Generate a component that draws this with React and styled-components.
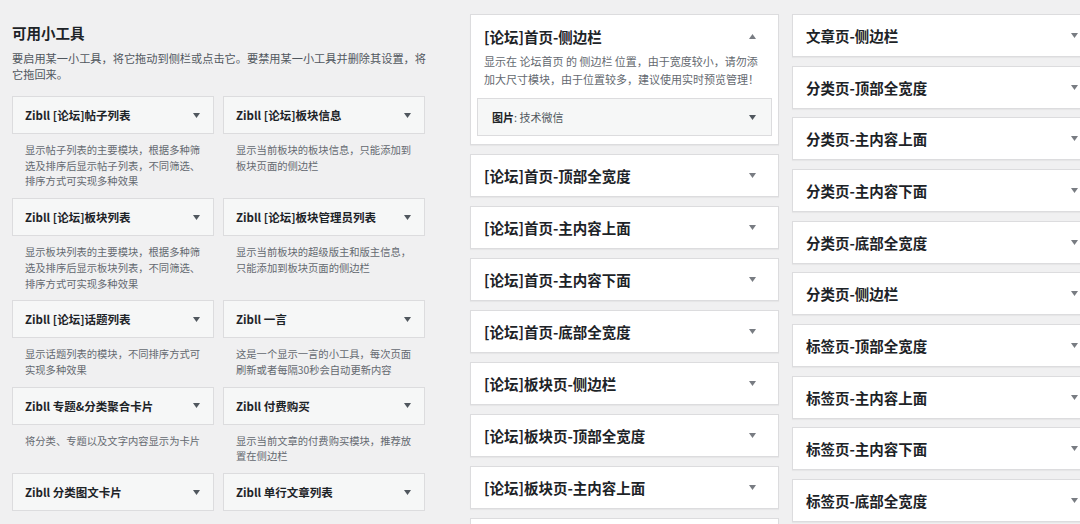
import React from "react";
import styled, { createGlobalStyle } from "styled-components";

const GlobalStyle = createGlobalStyle`
  html, body {
    margin: 0;
    padding: 0;
    background: #f0f0f1;
    overflow: hidden;
  }
  body {
    font-family: "Noto Sans CJK SC", "Noto Sans", sans-serif;
    color: #1d2327;
  }
`;

const Page = styled.div`
  display: flex;
  align-items: flex-start;
  width: 1120px;
  height: 524px;
  padding-left: 12px;
  box-sizing: border-box;
  overflow: hidden;
`;

const LeftPanel = styled.section`
  flex: 0 0 414px;
  width: 414px;
  min-width: 0;
  padding-top: 23px;
`;

const PanelTitle = styled.h2`
  margin: 0;
  font-size: 14.5px;
  line-height: 20px;
  font-weight: 700;
  color: #1d2327;
`;

const PanelIntro = styled.p`
  margin: 7px 0 0;
  font-size: 11.2px;
  line-height: 16px;
  color: #50575e;
  white-space: nowrap;
`;

const WidgetGrid = styled.div`
  display: grid;
  grid-template-columns: 202px 202px;
  column-gap: 9px;
  margin-top: 14px;
`;

const WidgetItem = styled.div`
  display: flex;
  flex-direction: column;
`;

const WidgetBox = styled.div`
  height: 38px;
  box-sizing: border-box;
  border: 1px solid #dcdcde;
  background: #f6f7f7;
  display: flex;
  align-items: center;
  justify-content: space-between;
  padding: 0 13px 0 12px;
`;

const WidgetName = styled.span`
  font-size: 11.5px;
  font-weight: 700;
  color: #1d2327;
  white-space: nowrap;
`;

const WidgetDesc = styled.div`
  padding: 8px 13px 9px;
  font-size: 10.3px;
  line-height: 15.7px;
  color: #646970;
  white-space: nowrap;
`;

const Arrow = styled.svg`
  width: 7px;
  height: 5px;
  flex: 0 0 auto;
  fill: ${(p) => p.$color || "#50575e"};
`;

const SidebarColumn = styled.div`
  flex: 0 0 309px;
  width: 309px;
  min-width: 0;
  display: flex;
  flex-direction: column;
  gap: ${(p) => p.$gap}px;
  margin-top: 14px;
  margin-left: ${(p) => p.$offset}px;
`;

const SidebarBox = styled.div`
  box-sizing: border-box;
  background: #fff;
  border: 1px solid #dcdcde;
  box-shadow: 0 1px 1px rgba(0, 0, 0, 0.04);
  padding-bottom: ${(p) => (p.$open ? "8px" : "0")};
`;

const SidebarHeader = styled.div`
  box-sizing: border-box;
  height: ${(p) => (p.$open ? "37px" : "41px")};
  padding: ${(p) => (p.$open ? "5px 22px 0 13px" : "0 22px 0 13px")};
  display: flex;
  align-items: center;
  justify-content: space-between;
`;

const SidebarName = styled.h3`
  margin: 0;
  font-size: 14.5px;
  font-weight: 700;
  color: #1d2327;
  white-space: nowrap;
`;

const SidebarDesc = styled.p`
  margin: 0;
  padding: 0 13px;
  font-size: 11px;
  line-height: 18px;
  color: #646970;
  white-space: nowrap;
`;

const InnerList = styled.div`
  margin-top: 10px;
  padding: 0 6px;
`;

const InnerWidget = styled.div`
  height: 38px;
  box-sizing: border-box;
  border: 1px solid #dcdcde;
  background: #f6f7f7;
  display: flex;
  align-items: center;
  justify-content: space-between;
  padding: 0 15px 0 14px;
`;

const InnerTitle = styled.span`
  font-size: 11px;
  font-weight: 700;
  color: #1d2327;
  white-space: nowrap;
`;

const InnerSub = styled.span`
  font-weight: 400;
  color: #50575e;
`;

const DownArrow = ({ color }) => (
  <Arrow viewBox="0 0 7 5" $color={color}>
    <polygon points="0,0 7,0 3.5,5" />
  </Arrow>
);

const UpArrow = ({ color }) => (
  <Arrow viewBox="0 0 7 5" $color={color}>
    <polygon points="0,5 7,5 3.5,0" />
  </Arrow>
);

const widgets = [
  { name: "Zibll [论坛]帖子列表", desc: ["显示帖子列表的主要模块，根据多种筛", "选及排序后显示帖子列表，不同筛选、", "排序方式可实现多种效果"] },
  { name: "Zibll [论坛]板块信息", desc: ["显示当前板块的板块信息，只能添加到", "板块页面的侧边栏"] },
  { name: "Zibll [论坛]板块列表", desc: ["显示板块列表的主要模块，根据多种筛", "选及排序后显示板块列表，不同筛选、", "排序方式可实现多种效果"] },
  { name: "Zibll [论坛]板块管理员列表", desc: ["显示当前板块的超级版主和版主信息，", "只能添加到板块页面的侧边栏"] },
  { name: "Zibll [论坛]话题列表", desc: ["显示话题列表的模块，不同排序方式可", "实现多种效果"] },
  { name: "Zibll 一言", desc: ["这是一个显示一言的小工具，每次页面", "刷新或者每隔30秒会自动更新内容"] },
  { name: "Zibll 专题&分类聚合卡片", desc: ["将分类、专题以及文字内容显示为卡片"] },
  { name: "Zibll 付费购买", desc: ["显示当前文章的付费购买模块，推荐放", "置在侧边栏"] },
  { name: "Zibll 分类图文卡片", desc: [] },
  { name: "Zibll 单行文章列表", desc: [] },
];

const middleBars = [
  "[论坛]首页-顶部全宽度",
  "[论坛]首页-主内容上面",
  "[论坛]首页-主内容下面",
  "[论坛]首页-底部全宽度",
  "[论坛]板块页-侧边栏",
  "[论坛]板块页-顶部全宽度",
  "[论坛]板块页-主内容上面",
  "",
];

const rightBars = [
  "文章页-侧边栏",
  "分类页-顶部全宽度",
  "分类页-主内容上面",
  "分类页-主内容下面",
  "分类页-底部全宽度",
  "分类页-侧边栏",
  "标签页-顶部全宽度",
  "标签页-主内容上面",
  "标签页-主内容下面",
  "标签页-底部全宽度",
];

const withBreaks = (lines) =>
  lines.map((l, i) => (
    <React.Fragment key={i}>
      {i > 0 && <br />}
      {l}
    </React.Fragment>
  ));

const SidebarBar = ({ name }) => (
  <SidebarBox>
    <SidebarHeader>
      <SidebarName>{name}</SidebarName>
      {name && <DownArrow color="#787c82" />}
    </SidebarHeader>
  </SidebarBox>
);

export default function App() {
  return (
    <>
      <GlobalStyle />
      <Page>
        <LeftPanel>
          <PanelTitle>可用小工具</PanelTitle>
          <PanelIntro>
            {withBreaks([
              "要启用某一小工具，将它拖动到侧栏或点击它。要禁用某一小工具并删除其设置，将",
              "它拖回来。",
            ])}
          </PanelIntro>
          <WidgetGrid>
            {widgets.map((w) => (
              <WidgetItem key={w.name}>
                <WidgetBox>
                  <WidgetName>{w.name}</WidgetName>
                  <DownArrow />
                </WidgetBox>
                {w.desc.length > 0 && <WidgetDesc>{withBreaks(w.desc)}</WidgetDesc>}
              </WidgetItem>
            ))}
          </WidgetGrid>
        </LeftPanel>

        <SidebarColumn $offset={44} $gap={9}>
          <SidebarBox $open>
            <SidebarHeader $open>
              <SidebarName>[论坛]首页-侧边栏</SidebarName>
              <UpArrow color="#787c82" />
            </SidebarHeader>
            <SidebarDesc>
              {withBreaks([
                "显示在 论坛首页 的 侧边栏 位置，由于宽度较小，请勿添",
                "加大尺寸模块，由于位置较多，建议使用实时预览管理！",
              ])}
            </SidebarDesc>
            <InnerList>
              <InnerWidget>
                <InnerTitle>
                  图片<InnerSub>: 技术微信</InnerSub>
                </InnerTitle>
                <DownArrow color="#50575e" />
              </InnerWidget>
            </InnerList>
          </SidebarBox>
          {middleBars.map((n, i) => (
            <SidebarBar key={i} name={n} />
          ))}
        </SidebarColumn>

        <SidebarColumn $offset={13} $gap={8.67}>
          {rightBars.map((n) => (
            <SidebarBar key={n} name={n} />
          ))}
        </SidebarColumn>
      </Page>
    </>
  );
}
